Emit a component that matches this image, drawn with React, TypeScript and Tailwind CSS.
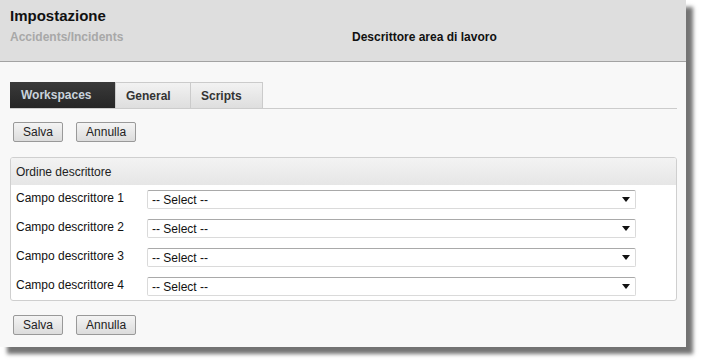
import { Fragment } from 'react';

const tabs = ['Workspaces', 'General', 'Scripts'];
const fields = ['Campo descrittore 1', 'Campo descrittore 2', 'Campo descrittore 3', 'Campo descrittore 4'];

function Buttons() {
  return (
    <div className="flex gap-[13px] pl-[13px]">
      {['Salva', 'Annulla'].map((b) => (
        <button
          key={b}
          className="h-[20px] px-[9px] text-[12px] leading-none text-[#222] border border-[#999] rounded-[2px] bg-gradient-to-b from-[#f4f4f4] to-[#dcdcdc]"
        >
          {b}
        </button>
      ))}
    </div>
  );
}

export default function App() {
  return (
    <div className="w-[703px] h-[364px] bg-white relative" style={{ fontFamily: '"Liberation Sans", Arial, sans-serif' }}>
      <div className="w-[686px] h-[347px] bg-[#f8f8f8] flex flex-col shadow-[7px_7px_4px_rgba(0,0,0,0.55)]">
        {/* header */}
        <div className="h-[62px] bg-[#dedede] border-b border-[#a3a3a3] pl-[10px] pt-[7px]">
          <div className="text-[15px] font-bold text-[#111] leading-[18px]">Impostazione</div>
          <div className="flex mt-[5px] text-[12px] font-bold leading-[14px]">
            <span className="w-[342px] text-[#a8a8a8]">Accidents/Incidents</span>
            <span className="text-[#111]">Descrittore area di lavoro</span>
          </div>
        </div>

        {/* tabs */}
        <div className="mt-[20px] mx-[10px] mr-[9px] flex border-b border-[#cccccc] h-[27px]">
          {tabs.map((t, i) => (
            <div
              key={t}
              className={
                i === 0
                  ? 'w-[105px] pl-[11px] flex items-center text-[12px] font-bold text-[#c9d3dc] bg-gradient-to-b from-[#3a3a3a] to-[#262626]'
                  : `${i === 1 ? 'w-[76px]' : 'w-[72px]'} pl-[10px] flex items-center text-[12px] font-bold text-[#333] border border-b-0 border-[#cbcbcb] ${i === 2 ? 'border-l-0' : ''} bg-gradient-to-b from-[#f2f2f2] to-[#dedede]`
              }
            >
              {t}
            </div>
          ))}
        </div>

        <div className="mt-[13px]">
          <Buttons />
        </div>

        {/* panel */}
        <div className="mt-[15px] ml-[10px] w-[667px] border border-[#cfcfcf] rounded-[3px] bg-white overflow-hidden">
          <div className="h-[27px] pl-[5px] flex items-center text-[12px] text-[#222] bg-gradient-to-b from-[#f3f3f3] to-[#e6e6e6]">
            Ordine descrittore
          </div>
          <div className="grid grid-cols-[131px_489px] gap-y-[10px] pl-[5px] pt-[5px] pb-[4px]">
            {fields.map((f) => (
              <Fragment key={f}>
                <div className="text-[12px] text-[#111] leading-[14px] pt-[1px]">{f}</div>
                <div className="h-[19px] bg-white border border-[#dadada] border-t-[#a9a9a9] rounded-[2px] flex items-center justify-between pl-[4px] pr-[5px] text-[12px] text-[#111]">
                  <span>-- Select --</span>
                  <svg width="8" height="5" viewBox="0 0 8 5">
                    <path d="M0 0h8L4 5z" fill="#111" />
                  </svg>
                </div>
              </Fragment>
            ))}
          </div>
        </div>

        <div className="mt-[14px]">
          <Buttons />
        </div>
      </div>
    </div>
  );
}
